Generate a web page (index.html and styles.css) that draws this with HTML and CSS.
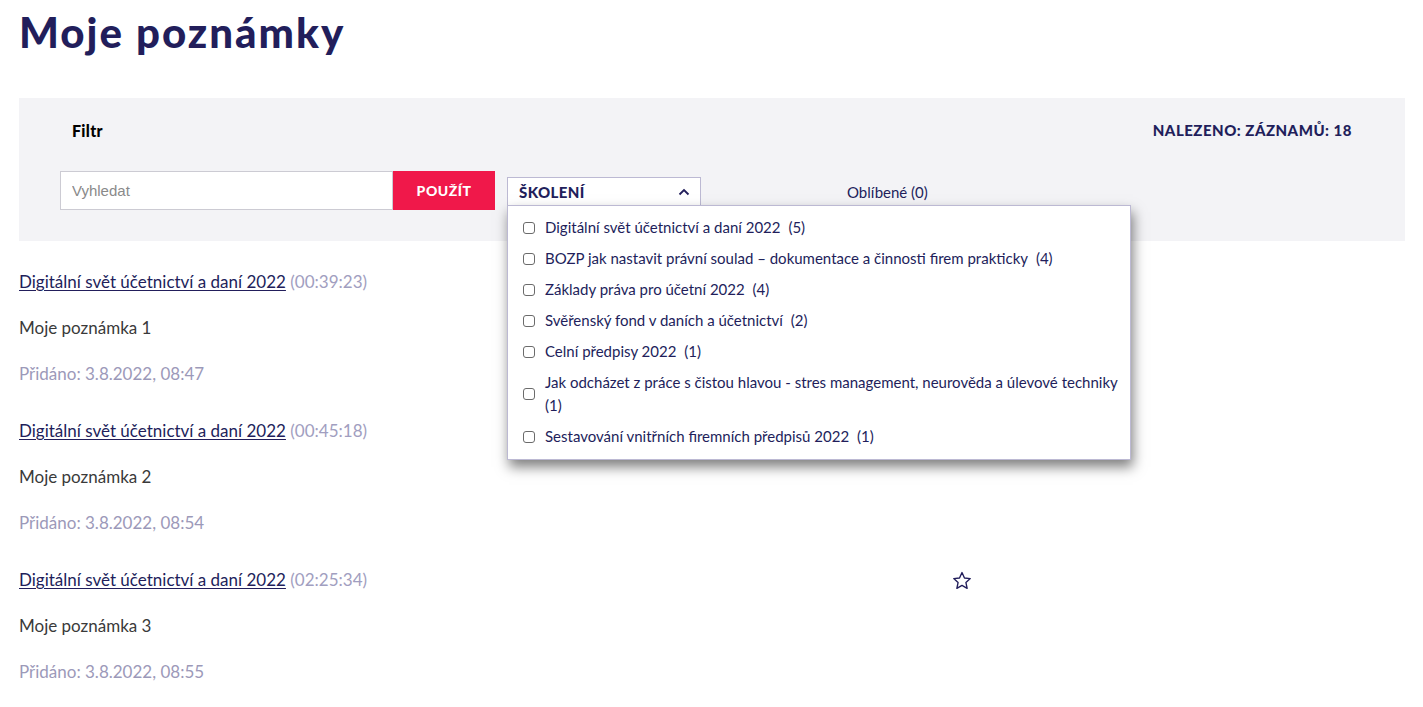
FILE: index.html
```html
<!DOCTYPE html>
<html lang="cs">
<head>
  <meta charset="UTF-8" />
  <title>Moje poznámky</title>
  <link rel="stylesheet" href="styles.css">
</head>
<body>
  <h1>Moje poznámky</h1>

  <div class="filter">
    <div class="filter-head">
      <span class="filter-title">Filtr</span>
      <span class="found">Nalezeno: záznamů: 18</span>
    </div>

    <div class="filter-row">
      <input type="text" class="search" placeholder="Vyhledat" />
      <button class="apply-btn">Použít</button>

      <div class="select-wrap">
        <div class="select">
          <span>Školení</span>
          <svg class="chevron" width="12" height="8" viewBox="0 0 12 8">
            <path d="M1.5 6.5 L6 2 L10.5 6.5" fill="none" stroke="#221e5b" stroke-width="1.8" />
          </svg>
        </div>

        <div class="dropdown">
          <label class="option"><span class="box"></span><span>Digitální svět účetnictví a daní 2022<span class="sep"> </span>(5)</span></label>
          <label class="option"><span class="box"></span><span>BOZP jak nastavit právní soulad – dokumentace a činnosti firem prakticky<span class="sep"> </span>(4)</span></label>
          <label class="option"><span class="box"></span><span>Základy práva pro účetní 2022<span class="sep"> </span>(4)</span></label>
          <label class="option"><span class="box"></span><span>Svěřenský fond v daních a účetnictví<span class="sep"> </span>(2)</span></label>
          <label class="option"><span class="box"></span><span>Celní předpisy 2022<span class="sep"> </span>(1)</span></label>
          <label class="option"><span class="box"></span><span>Jak odcházet z práce s čistou hlavou - stres management, neurověda a úlevové techniky<span class="sep"> </span>(1)</span></label>
          <label class="option"><span class="box"></span><span>Sestavování vnitřních firemních předpisů 2022<span class="sep"> </span>(1)</span></label>
        </div>
      </div>

      <span class="favs">Oblíbené (0)</span>
    </div>
  </div>

  <div class="notes">
    <div class="note">
      <p><a href="#">Digitální svět účetnictví a daní 2022</a> <span class="time">(00:39:23)</span></p>
      <p class="text">Moje poznámka 1</p>
      <p class="date">Přidáno: 3.8.2022, 08:47</p>
    </div>
    <div class="note">
      <p><a href="#">Digitální svět účetnictví a daní 2022</a> <span class="time">(00:45:18)</span></p>
      <p class="text">Moje poznámka 2</p>
      <p class="date">Přidáno: 3.8.2022, 08:54</p>
    </div>
    <div class="note">
      <p class="note-head">
        <span><a href="#">Digitální svět účetnictví a daní 2022</a> <span class="time">(02:25:34)</span></span>
        <svg class="star" width="22" height="22" viewBox="0 0 24 24">
          <path d="M12 2.8 L14.7 8.7 L21 9.4 L16.3 13.7 L17.6 20 L12 16.8 L6.4 20 L7.7 13.7 L3 9.4 L9.3 8.7 Z" fill="none" stroke="#221e5b" stroke-width="1.5" stroke-linejoin="round" />
        </svg>
      </p>
      <p class="text">Moje poznámka 3</p>
      <p class="date">Přidáno: 3.8.2022, 08:55</p>
    </div>
  </div>
</body>
</html>
```

FILE: styles.css
```css
body {
  margin: 0;
  padding: 0 18px 0 19px;
  font-family: Lato, "Noto Sans", sans-serif;
  color: #221e5b;
  background: #fff;
}

h1 {
  margin: 0;
  padding-top: 8px;
  font-size: 42px;
  font-weight: 900;
  line-height: 48px;
  letter-spacing: 2px;
  color: #221e5b;
}

.filter {
  margin-top: 42px;
  background: #f3f3f6;
  height: 143px;
  box-sizing: border-box;
  padding: 20px 0 0 41px;
}

.filter-head {
  display: flex;
  justify-content: space-between;
  align-items: center;
  padding: 0 53px 0 12px;
  height: 24px;
}

.filter-title {
  font-weight: 900;
  font-size: 16px;
  letter-spacing: 0.3px;
  color: #000;
}

.found {
  font-weight: 900;
  font-size: 15px;
  text-transform: uppercase;
  letter-spacing: 0.5px;
}

.filter-row {
  display: flex;
  align-items: flex-start;
  margin-top: 29px;
}

.search {
  width: 333px;
  height: 39px;
  box-sizing: border-box;
  border: 1px solid #cccbd3;
  padding: 0 11px;
  font-family: "Liberation Sans", Arial, sans-serif;
  font-size: 15px;
  background: #fff;
  outline: none;
}

.search::placeholder {
  color: #8a8a8a;
}

.apply-btn {
  width: 102px;
  height: 39px;
  border: none;
  background: #f0184a;
  color: #fff;
  font-family: Lato, sans-serif;
  font-weight: 900;
  font-size: 14px;
  letter-spacing: 0.5px;
  text-transform: uppercase;
  cursor: pointer;
}

.select-wrap {
  position: relative;
  margin: 6px 0 0 12px;
}

.select {
  width: 194px;
  height: 28px;
  box-sizing: border-box;
  border: 1px solid #bcb9d3;
  border-bottom: none;
  background: #fff;
  display: flex;
  align-items: center;
  justify-content: space-between;
  padding: 0 10px 0 11px;
  font-weight: 900;
  font-size: 15px;
  text-transform: uppercase;
  letter-spacing: 0.4px;
}

.dropdown {
  position: absolute;
  top: 28px;
  left: 0;
  width: 624px;
  box-sizing: border-box;
  background: #fff;
  border: 1px solid #bcb9d3;
  box-shadow: 2px 7px 12px rgba(0, 0, 0, 0.5);
  padding: 6px 10px 7px 15px;
  z-index: 2;
}

.option {
  display: flex;
  align-items: center;
  gap: 10px;
  font-size: 15px;
  line-height: 23px;
  padding: 4px 0;
}

.sep {
  word-spacing: 4px;
}

.box {
  flex: none;
  width: 12px;
  height: 12px;
  box-sizing: border-box;
  border: 1px solid #6b6b6b;
  border-radius: 3px;
  background: #fff;
}

.favs {
  margin: 12px 0 0 146px;
  font-size: 15px;
}

.notes {
  margin-top: 29px;
}

.note {
  display: flex;
  flex-direction: column;
  gap: 22px;
  margin-bottom: 33px;
}

.note p {
  margin: 0;
  font-size: 17px;
  line-height: 24px;
}

.note a {
  color: #221e5b;
  text-decoration: underline;
  text-underline-offset: 2px;
}

.note-head {
  display: flex;
  align-items: center;
  justify-content: space-between;
  width: 954px;
}

.star {
  margin-top: 2px;
}

.time {
  color: #a19ec0;
}

.text {
  color: #3a3a3a;
}

.date {
  color: #9c99b9;
}
```
